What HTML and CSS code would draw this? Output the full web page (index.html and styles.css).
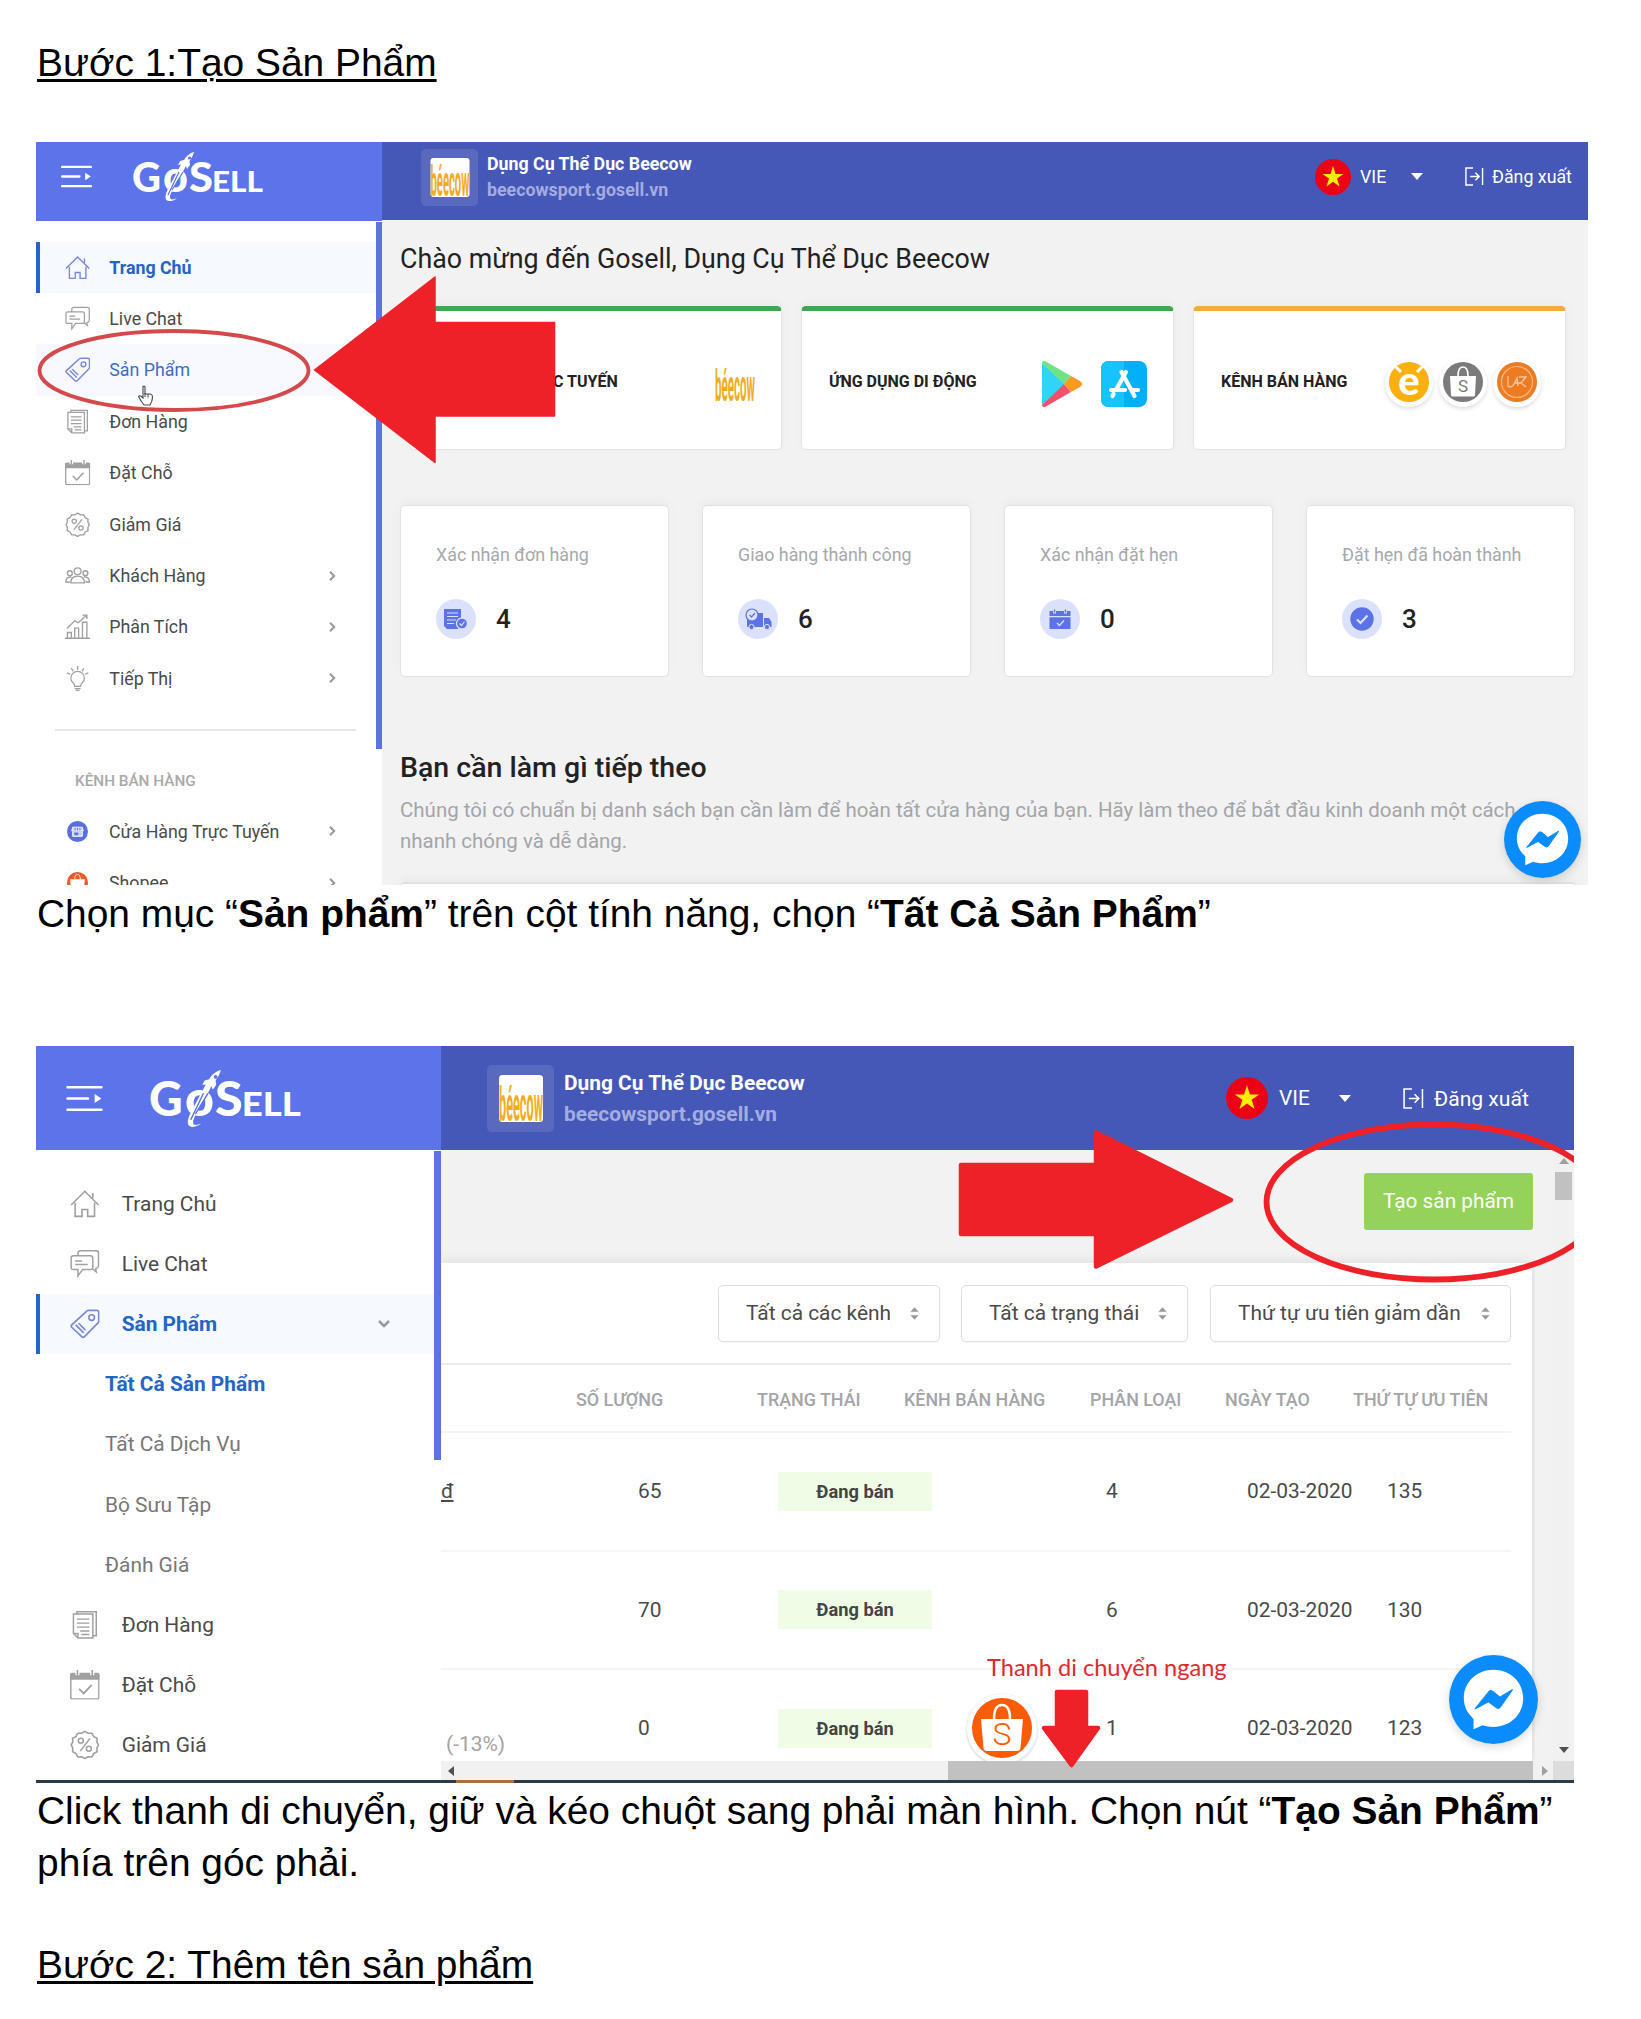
FILE: index.html
```html
<!DOCTYPE html>
<html lang="vi">
<head>
<meta charset="utf-8">
<title>Hướng dẫn tạo sản phẩm</title>
<link rel="stylesheet" href="styles.css">
</head>
<body>
<svg class="defs" aria-hidden="true">
  <symbol id="i-menu" viewBox="0 0 32 24"><path d="M1 2h30M1 12h18M1 22h30" fill="none" stroke="#fff" stroke-width="2.4" stroke-linecap="round"/><path d="M25 8l6 4-6 4z" fill="#fff"/></symbol>
  <symbol id="i-rocket" viewBox="0 0 130 50"><path d="M61 0c-4 1-8 4-10 8l-4 1-2 4 3-.5L36 35c-5 9-5 15 2 14 3-.5 5-2 6-3-4 2-7 2-7-1 0-4 9-18 16-31l1 3 3-4-.5-4c2-3 4-6 4.500-9z" fill="#fff"/><path d="M46 20L35 43M50 20L39 38" stroke="#5c73e9" stroke-width="1.200"/><circle cx="56.500" cy="6" r="1.600" fill="#5c73e9"/></symbol>
  <symbol id="i-home" viewBox="0 0 26 26"><path d="M1 14L13 2l12 12M4.500 12v12h6v-6h5v6h6V12M20 8V3.500" fill="none" stroke="currentColor" stroke-width="1.400"/></symbol>
  <symbol id="i-chat" viewBox="0 0 26 26"><path d="M7 6V3.500Q7 1.500 9 1.500h14q2 0 2 2V14q0 2-1 2.500-.5.500-1.500.500l.5 3-3-2.500M3 6h15q2 0 2 2v8q0 2-2 2h-7l-4 5.500V18H3q-2 0-2-2V8q0-2 2-2zM4.500 10.500h6M4.500 13.500h11" fill="none" stroke="currentColor" stroke-width="1.300"/></symbol>
  <symbol id="i-tag" viewBox="0 0 26 26"><path d="M14 2.500Q15 1.200 16.500 1.200H23.500Q25.200 1.200 25.200 3V11.500L12.500 24.500Q11.500 25.500 10.500 24.500L1.500 16Q.5 15 1.500 14zM5 14l7 7M7.500 12.500l6 6" fill="none" stroke="currentColor" stroke-width="1.500"/><circle cx="19" cy="7.500" r="2.500" fill="none" stroke="currentColor" stroke-width="1.400"/></symbol>
  <symbol id="i-orders" viewBox="0 0 26 26"><path d="M6 3.500V1.500h17v21h-2.500M3 3.500h17v21H7l-4-4zM3 20.500h4v4M6 8h11M6 11.500h11M6 15h11M9 18.500h8M10 21.500h7" fill="none" stroke="currentColor" stroke-width="1.300"/></symbol>
  <symbol id="i-cal" viewBox="0 0 26 26"><path d="M.7 4h24.600v20q0 1.300-1.300 1.300H2Q.7 25.300.7 24z" fill="none" stroke="currentColor" stroke-width="1.300"/><path d="M0 4.500Q0 2.500 2 2.500h22q2 0 2 2v4H0z" fill="currentColor"/><path d="M6.500 0v4.500M19.500 0v4.500" stroke="#fff" stroke-width="3.600"/><path d="M6.500 0v5M19.500 0v5" stroke="currentColor" stroke-width="1.400"/><path d="M8 16.500l4 4 7-7.500" fill="none" stroke="currentColor" stroke-width="1.500"/></symbol>
  <symbol id="i-sale" viewBox="0 0 26 26"><path d="M13 1.200l2.900 1.700 3.300-.1 1.600 3 2.900 1.500-.1 3.400L25 13l-1.400 2.700.1 3.400-2.900 1.500-1.600 3-3.300-.1L13 25l-2.900-1.500-3.300.1-1.600-3-2.900-1.500.1-3.400L1 13l1.400-2.300-.1-3.400 2.900-1.500 1.600-3 3.300.1z" fill="none" stroke="currentColor" stroke-width="1.400" stroke-linejoin="round"/><path d="M17.500 7.500l-8.500 11" stroke="currentColor" stroke-width="1.300"/><circle cx="9.500" cy="9.500" r="2.200" fill="none" stroke="currentColor" stroke-width="1.300"/><circle cx="16.500" cy="16.500" r="2.200" fill="none" stroke="currentColor" stroke-width="1.300"/></symbol>
  <symbol id="i-users" viewBox="0 0 26 26"><g fill="none" stroke="currentColor" stroke-width="1.400"><circle cx="13" cy="8.500" r="3.500"/><circle cx="5" cy="10.500" r="2.500"/><circle cx="21" cy="10.500" r="2.500"/><path d="M6 20.500q0-7 7-7t7 7zM6.500 14.500Q1 14 .8 19.500H5M19.500 14.500Q25 14 25.200 19.500H21"/></g></symbol>
  <symbol id="i-chart" viewBox="0 0 26 26"><path d="M0 25h26M2.500 25v-6h4v6M10 25V14.500h4V25M18 25V8.500h4.500V25M2 15L10 7l3.500 2L22 1.500M18 1.200h4.500v4" fill="none" stroke="currentColor" stroke-width="1.400"/></symbol>
  <symbol id="i-bulb" viewBox="0 0 26 26"><path d="M10 21q0-2-2-4-2-2-2-4.500a7 7 0 0 1 14 0q0 2.500-2 4.500-2 2-2 4zM10 23.300h6M11 25.200h4M13 0v4M6.500 2l2 3.500M19.500 2l-2 3.500M2 7l3.500 1.500M24 7l-3.500 1.500" fill="none" stroke="currentColor" stroke-width="1.300"/></symbol>
  <symbol id="i-store" viewBox="0 0 22 22"><circle cx="11" cy="11" r="11" fill="#5a6fdf"/><path d="M6 6.500h10l1 4H5zM6 11v5h10v-5" fill="#c9d1fb" stroke="#fff" stroke-width="1"/><path d="M8 12.500h3.500v2H8zM8.500 7v3M11 7v3M13.500 7v3" fill="#5a6fdf" stroke="#5a6fdf" stroke-width=".8"/></symbol>
  <symbol id="i-bag" viewBox="0 0 60 60"><circle cx="30" cy="30" r="30" fill="currentColor"/><path d="M9 21h42l-2.500 29q-.3 3-3.500 3H15q-3.200 0-3.500-3z" fill="#fff"/><path d="M22 21Q22 7 30 7t8 14" fill="none" stroke="#fff" stroke-width="2.500"/></symbol>
  <symbol id="i-right" viewBox="0 0 8 12"><path d="M1 1l5 5-5 5" fill="none" stroke="#999" stroke-width="2.500"/></symbol>
  <symbol id="i-down" viewBox="0 0 12 8"><path d="M1 1l5 5 5-5" fill="none" stroke="#999" stroke-width="2.500"/></symbol>
  <symbol id="i-flag" viewBox="0 0 36 36"><circle cx="18" cy="18" r="18" fill="#ec0015"/><path d="M18 7l2.500 8h8l-6.500 4.600 2.500 7.900L18 22.700l-6.500 4.800 2.500-7.900L7.500 15h8z" fill="#ffef00"/></symbol>
  <symbol id="i-exit" viewBox="0 0 20 20"><path d="M9 1H1.500v18H9M6 10h9M11.500 6l4 4-4 4M19 1v18" fill="none" stroke="#fff" stroke-width="1.500"/></symbol>
  <symbol id="i-messenger" viewBox="0 0 78 78"><circle cx="39" cy="39" r="39" fill="#0a8cff"/><path d="M39 13c-15 0-26 11-26 25 0 7 3 13 8.500 18v9l8-3.500c3 1 6 1.500 9.500 1.500 15 0 26-11 26-25S54 13 39 13z" fill="#fff"/><path d="M23 47l12-15q1.500-1.500 3.500 0l6 5 11-6.500-10.500 15q-1.500 2-3.500.5l-7-5z" fill="#0a8cff" stroke="#0a8cff" stroke-linejoin="round"/></symbol>
  <symbol id="i-sort" viewBox="0 0 10 14"><path d="M5 0l4.500 5h-9zM5 14L.5 9h9z" fill="#999"/></symbol>
</svg>

<main class="doc">
  <h2 class="step">Bước 1:Tạo Sản Phẩm</h2>

  <section class="shot shot-home">
    <div class="side">
      <div class="brand">
        <svg class="burger"><use href="#i-menu"/></svg>
        <svg class="logo" viewBox="0 0 130 50"><text class="lg" x="-1" y="40" textLength="29" lengthAdjust="spacingAndGlyphs">G</text><text class="lo" x="30" y="40" textLength="25" lengthAdjust="spacingAndGlyphs">o</text><text class="lg" x="56" y="40" textLength="24" lengthAdjust="spacingAndGlyphs">S</text><text class="ls" x="79" y="40" textLength="51" lengthAdjust="spacingAndGlyphs">ELL</text><use href="#i-rocket"/></svg>
      </div>
      <nav class="menu">
        <a class="item active"><svg><use href="#i-home"/></svg><span>Trang Chủ</span></a>
        <a class="item"><svg><use href="#i-chat"/></svg><span>Live Chat</span></a>
        <a class="item hover"><svg><use href="#i-tag"/></svg><span>Sản Phẩm</span></a>
        <a class="item"><svg><use href="#i-orders"/></svg><span>Đơn Hàng</span></a>
        <a class="item"><svg><use href="#i-cal"/></svg><span>Đặt Chỗ</span></a>
        <a class="item"><svg><use href="#i-sale"/></svg><span>Giảm Giá</span></a>
        <a class="item"><svg><use href="#i-users"/></svg><span>Khách Hàng</span><svg class="chev"><use href="#i-right"/></svg></a>
        <a class="item"><svg><use href="#i-chart"/></svg><span>Phân Tích</span><svg class="chev"><use href="#i-right"/></svg></a>
        <a class="item"><svg><use href="#i-bulb"/></svg><span>Tiếp Thị</span><svg class="chev"><use href="#i-right"/></svg></a>
        <hr>
        <p class="group">KÊNH BÁN HÀNG</p>
        <a class="item"><svg class="round"><use href="#i-store"/></svg><span>Cửa Hàng Trực Tuyến</span><svg class="chev"><use href="#i-right"/></svg></a>
        <a class="item"><svg class="round shopee"><use href="#i-bag"/></svg><span>Shopee</span><svg class="chev"><use href="#i-right"/></svg></a>
      </nav>
      <i class="track"></i>
    </div>
    <div class="main">
      <header class="top">
        <div class="shop"><svg viewBox="0 0 40 40"><rect width="40" height="40" rx="3" fill="#fff"/><text class="bee" transform="translate(0 39) scale(1 2.900)" textLength="40" lengthAdjust="spacingAndGlyphs">béecow</text></svg></div>
        <div class="who"><b>Dụng Cụ Thể Dục Beecow</b><em>beecowsport.gosell.vn</em></div>
        <svg class="flag"><use href="#i-flag"/></svg><span class="lang">VIE</span><i class="caret"></i>
        <svg class="exit"><use href="#i-exit"/></svg><span class="logout">Đăng xuất</span>
      </header>
      <div class="home">
        <h1>Chào mừng đến Gosell, Dụng Cụ Thể Dục Beecow</h1>
        <div class="channels">
          <div class="card green"><span>CỬA HÀNG TRỰC TUYẾN</span><svg class="beecow" viewBox="0 0 40 40"><text class="bee" transform="translate(0 37) scale(1 2.900)" textLength="40" lengthAdjust="spacingAndGlyphs">béecow</text></svg></div>
          <div class="card green"><span>ỨNG DỤNG DI ĐỘNG</span>
            <svg class="play" viewBox="0 0 40 46"><path d="M0 2v42L23 23z" fill="#32d3fb"/><path d="M0 2Q0 0 3 0L29 15l-7 8z" fill="#72e186"/><path d="M3 46Q0 46 0 44l22-21 7 8z" fill="#f2506d"/><path d="M29 15l9 5q4 3 0 6l-9 5-7-8z" fill="#f79a1d"/></svg>
            <svg class="appstore" viewBox="0 0 46 46"><rect width="46" height="46" rx="8" fill="#02b0f7"/><path d="M0 8q0-8 8-8h15v46H8q-8 0-8-8z" fill="#17c3fd"/><path d="M20.500 11l13 24M25 11L15.500 28M10 29h14M31 29h6M12.500 33L11.500 35" stroke="#fff" stroke-width="4.200" stroke-linecap="round"/></svg></div>
          <div class="card orange"><span>KÊNH BÁN HÀNG</span>
            <svg class="chan" viewBox="0 0 40 40"><circle cx="20" cy="20" r="20" fill="#fbb00d"/><path d="M5 3l7 7M35 3l-7 7" stroke="#fff" stroke-width="3"/><text class="ce" x="20" y="33" text-anchor="middle">e</text></svg>
            <svg class="chan" viewBox="0 0 40 40"><circle cx="20" cy="20" r="20" fill="#7b7b7b"/><path d="M7 14h26l-1 19q0 1.500-2 1.500H10q-2 0-2-1.500z" fill="#fff"/><path d="M15 14q0-9 5-9t5 9" fill="none" stroke="#fff" stroke-width="1.600"/><text class="cs" x="20" y="30" text-anchor="middle">S</text></svg>
            <svg class="chan" viewBox="0 0 40 40"><circle cx="20" cy="20" r="20" fill="#ee7a22"/><circle cx="20" cy="20" r="15.500" fill="none" stroke="#fbb98a" stroke-width="1.200"/><path d="M11 14v9q0 2 2 2 3 0 5-5l2-4 1 8M17 21h7M22 15h7l-5 6 5 4" fill="none" stroke="#fbc7a0" stroke-width="1.300"/></svg></div>
        </div>
        <div class="stats">
          <div class="card"><p>Xác nhận đơn hàng</p><div><svg viewBox="0 0 40 40"><circle cx="20" cy="20" r="20" fill="#dce1fb"/><path d="M8 10h17v12l-3 8H11l-3-3z" fill="#5b73e4"/><path d="M11 14h11M11 17.500h11M11 21h9M11 24.500h7" stroke="#dce1fb" stroke-width="1.200"/><circle cx="26" cy="24.500" r="5.500" fill="#5b73e4" stroke="#dce1fb" stroke-width="1.300"/><path d="M23.500 24.500l2 2 3-4" fill="none" stroke="#dce1fb" stroke-width="1.200"/></svg><b>4</b></div></div>
          <div class="card"><p>Giao hàng thành công</p><div><svg viewBox="0 0 40 40"><circle cx="20" cy="20" r="20" fill="#dce1fb"/><path d="M9 14h16v14H9zM26 19h5l2.500 4v5H26z" fill="#5b73e4"/><circle cx="13.500" cy="28" r="2.600" fill="#5b73e4" stroke="#dce1fb"/><circle cx="29" cy="28" r="2.600" fill="#5b73e4" stroke="#dce1fb"/><circle cx="14" cy="16" r="6" fill="#dce1fb" stroke="#5b73e4" stroke-width="1.200"/><path d="M11.500 16l2 2 3.500-4" fill="none" stroke="#5b73e4" stroke-width="1.200"/></svg><b>6</b></div></div>
          <div class="card"><p>Xác nhận đặt hẹn</p><div><svg viewBox="0 0 40 40"><circle cx="20" cy="20" r="20" fill="#dce1fb"/><path d="M9.500 12h21v5h-21zM9.500 18.300h21V30h-21z" fill="#5b73e4"/><path d="M14.500 10v4.500M25.500 10v4.500" stroke="#dce1fb" stroke-width="3"/><path d="M14.500 10.500v3M25.500 10.500v3" stroke="#5b73e4" stroke-width="1.400"/><path d="M17 24l2.500 2.500 4.500-5" fill="none" stroke="#dce1fb" stroke-width="1.400"/></svg><b>0</b></div></div>
          <div class="card"><p>Đặt hẹn đã hoàn thành</p><div><svg viewBox="0 0 40 40"><circle cx="20" cy="20" r="20" fill="#dce1fb"/><circle cx="20" cy="20" r="11.700" fill="#5b73e4"/><path d="M15 20.500l3.500 3.500 7-7.500" fill="none" stroke="#dce1fb" stroke-width="2.200"/></svg><b>3</b></div></div>
        </div>
        <h3>Bạn cần làm gì tiếp theo</h3>
        <p class="intro">Chúng tôi có chuẩn bị danh sách bạn cần làm để hoàn tất cửa hàng của bạn. Hãy làm theo để bắt đầu kinh doanh một cách<br>nhanh chóng và dễ dàng.</p>
        <div class="next"></div>
      </div>
    </div>
    <svg class="marks" viewBox="36 142 1552 743">
      <ellipse cx="174" cy="370.500" rx="134.500" ry="39.500" fill="none" stroke="#d44a4c" stroke-width="3.800"/>
      <path d="M314.500 370L435 277v45.500h119.500V416H435v46.500z" fill="#ee2129" stroke="#ee2129" stroke-width="1.500" stroke-linejoin="round"/>
      <path d="M143 386.500q1.800-1 2 1v6.500h5.500q2 .5 2 3c0 3-.5 5-2.500 8h-6q-3-3.500-5.500-8.500 1-1.500 2.800 0l1.700 1.500z" fill="#fff" stroke="#444" stroke-width="1.100"/><path d="M145 393v4M148 394v3.500" stroke="#444"/>
    </svg>
    <svg class="messenger"><use href="#i-messenger"/></svg>
  </section>

  <p class="text">Chọn mục “<b>Sản phẩm</b>” trên cột tính năng, chọn “<b>Tất Cả Sản Phẩm</b>”</p>

  <section class="shot shot-list">
    <div class="side">
      <div class="brand">
        <svg class="burger"><use href="#i-menu"/></svg>
        <svg class="logo" viewBox="0 0 130 50"><text class="lg" x="-1" y="40" textLength="29" lengthAdjust="spacingAndGlyphs">G</text><text class="lo" x="30" y="40" textLength="25" lengthAdjust="spacingAndGlyphs">o</text><text class="lg" x="56" y="40" textLength="24" lengthAdjust="spacingAndGlyphs">S</text><text class="ls" x="79" y="40" textLength="51" lengthAdjust="spacingAndGlyphs">ELL</text><use href="#i-rocket"/></svg>
      </div>
      <nav class="menu">
        <a class="item"><svg><use href="#i-home"/></svg><span>Trang Chủ</span></a>
        <a class="item"><svg><use href="#i-chat"/></svg><span>Live Chat</span></a>
        <a class="item active"><svg><use href="#i-tag"/></svg><span>Sản Phẩm</span><svg class="chev open"><use href="#i-down"/></svg></a>
        <a class="sub current">Tất Cả Sản Phẩm</a>
        <a class="sub">Tất Cả Dịch Vụ</a>
        <a class="sub">Bộ Sưu Tập</a>
        <a class="sub">Đánh Giá</a>
        <a class="item"><svg><use href="#i-orders"/></svg><span>Đơn Hàng</span></a>
        <a class="item"><svg><use href="#i-cal"/></svg><span>Đặt Chỗ</span></a>
        <a class="item"><svg><use href="#i-sale"/></svg><span>Giảm Giá</span></a>
      </nav>
      <i class="track"></i>
    </div>
    <div class="main">
      <header class="top">
        <div class="shop"><svg viewBox="0 0 40 40" preserveAspectRatio="none"><rect width="40" height="40" rx="3" fill="#fff"/><text class="bee" transform="translate(0 39) scale(1 2.700)" textLength="40" lengthAdjust="spacingAndGlyphs">béecow</text></svg></div>
        <div class="who"><b>Dụng Cụ Thể Dục Beecow</b><em>beecowsport.gosell.vn</em></div>
        <svg class="flag"><use href="#i-flag"/></svg><span class="lang">VIE</span><i class="caret"></i>
        <svg class="exit"><use href="#i-exit"/></svg><span class="logout">Đăng xuất</span>
      </header>
      <div class="list">
        <div class="bar"><button class="create">Tạo sản phẩm</button></div>
        <div class="panel">
          <div class="filters">
            <div class="select s1"><span>Tất cả các kênh</span><svg><use href="#i-sort"/></svg></div>
            <div class="select s2"><span>Tất cả trạng thái</span><svg><use href="#i-sort"/></svg></div>
            <div class="select s3"><span>Thứ tự ưu tiên giảm dần</span><svg><use href="#i-sort"/></svg></div>
          </div>
          <div class="head"><i></i><span>SỐ LƯỢNG</span><span>TRẠNG THÁI</span><span>KÊNH BÁN HÀNG</span><span>PHÂN LOẠI</span><span>NGÀY TẠO</span><span>THỨ TỰ ƯU TIÊN</span></div>
          <div class="row"><span class="price"><u>đ</u></span><span>65</span><b>Đang bán</b><i></i><span>4</span><span>02-03-2020</span><span>135</span></div>
          <div class="row"><i></i><span>70</span><b>Đang bán</b><i></i><span>6</span><span>02-03-2020</span><span>130</span></div>
          <div class="row last"><span class="off">(-13%)</span><span>0</span><b>Đang bán</b><svg class="bag" viewBox="0 0 60 60"><use href="#i-bag"/><text x="30" y="47" text-anchor="middle">S</text></svg><span>1</span><span>02-03-2020</span><span>123</span></div>
        </div>
        <div class="hbar"><i class="tri left"></i><i class="thumb"></i><i class="tri right"></i></div>
        <div class="vbar"><i class="tri up"></i><i class="thumb"></i><i class="tri dn"></i></div>
      </div>
    </div>
    <div class="taskbar"><i></i></div>
    <svg class="marks" viewBox="36 1046 1538 737">
      <ellipse cx="1434" cy="1202" rx="167.500" ry="77.500" fill="none" stroke="#ee2129" stroke-width="5.800"/>
      <path d="M961 1165h135v-32.500l135 67.500-135 66.500V1234H961z" fill="#ee2129" stroke="#ee2129" stroke-width="4.500" stroke-linejoin="round"/>
      <path d="M1057 1692h29v36h12l-26.500 37-27.500-37h13z" fill="#ee2129" stroke="#ee2129" stroke-width="4.500" stroke-linejoin="round"/>
    </svg>
    <span class="note">Thanh di chuyển ngang</span>
    <svg class="messenger"><use href="#i-messenger"/></svg>
  </section>

  <p class="text second">Click thanh di chuyển, giữ và kéo chuột sang phải màn hình. Chọn nút “<b>Tạo Sản Phẩm</b>”<br>phía trên góc phải.</p>
  <h2 class="step">Bước 2: Thêm tên sản phẩm</h2>
</main>
</body>
</html>
```
FILE: styles.css
```css
* { box-sizing: border-box; }
body { margin: 0; background: #fff; color: #000; font-family: "Liberation Sans", Arial, sans-serif; }
.defs { position: absolute; width: 0; height: 0; }
svg { display: block; flex: none; overflow: visible; }
.doc { width: 1641px; height: 2019px; overflow: hidden; padding: 37px 0 0 36px; display: flex; flex-direction: column; }
.step, .text { margin: 0; font-size: 38.9px; line-height: 51.5px; font-weight: 400; white-space: nowrap; padding-left: 1px; }
.step { text-decoration: underline; text-decoration-thickness: 3px; text-underline-offset: 3px; }
.doc > .step:first-child { height: 105px; }
.text { height: 161px; padding-top: 3px; }
.text.second { height: 156px; padding-top: 2px; }

/* screenshots */
.shot { position: relative; display: flex; overflow: hidden; font-family: Roboto, sans-serif; color: #4a4a4a; background: #fff; white-space: nowrap; flex: none; }
.shot-home { width: 1552px; height: 743px; font-size: 17.8px; }
.shot-list { width: 1538px; height: 737px; font-size: 20.9px; }
.side { position: relative; flex: none; background: #fff; }
.shot-home .side { width: 346px; }
.shot-list .side { width: 405px; }
.brand { background: #5c73e9; display: flex; align-items: flex-start; }
.shot-home .brand { height: 79px; padding: 10px 0 0 25px; gap: 41px; }
.shot-list .brand { height: 104px; padding: 24px 0 0 30px; gap: 47px; }
.burger { width: 31px; height: 23px; margin-top: 13px; }
.shot-list .burger { width: 37px; height: 27px; margin-top: 15px; }
.logo { width: 130px; height: 50px; fill: #fff; font-family: Lato, sans-serif; font-weight: 900; }
.shot-list .logo { width: 151px; height: 58px; }
.lg { font-size: 41px; }
.lo { font-size: 43px; }
.ls { font-size: 28.500px; }
.track { position: absolute; right: 0; background: #5c73e0; }
.shot-home .track { top: 80px; width: 6px; height: 527px; }
.shot-list .track { top: 105px; width: 7px; height: 309px; }

.menu { display: flex; flex-direction: column; }
.shot-home .menu { padding-top: 20.5px; }
.shot-list .menu { padding-top: 23.5px; }
.item { display: flex; align-items: center; flex: none; }
.shot-home .item { height: 51.4px; padding-left: 29px; padding-right: 46px; }
.shot-list .item, .sub { height: 60.2px; padding-left: 34px; padding-right: 51px; }
.item > svg:first-child { width: 1.42em; height: 1.42em; color: #a0a0a0; margin-right: 19px; }
.shot-list .item > svg:first-child { margin-right: 22px; }
.shot-home .item .round { width: 21px; height: 21px; margin-left: 2px; margin-right: 21px; }
.shot-home .item .shopee { color: #ee5a24; }
.item.active { background: #f6f9fe; color: #2465c5; font-weight: 700; box-shadow: inset 4px 0 #2465c5; }
.item.hover { background: #f7f9fe; color: #3a6fc4; }
.item.active > svg:first-child, .item.hover > svg:first-child { color: #7c88d6; }
.chev { width: 7px; height: 10px; margin-left: auto; }
.chev.open { width: 12px; height: 8px; margin-right: 0; }
.sub { display: flex; align-items: center; padding-left: 69px !important; color: #777; }
.sub.current { color: #2465c5; font-weight: 700; }
hr { width: 301px; height: 2px; border: 0; background: #e6e6e6; margin: 24.500px 0 0 19px; flex: none; }
.group { margin: 36px 0 11px 39px; height: 28px; line-height: 28px; font-size: 15.300px; font-weight: 500; color: #a9a9a9; }

.main { flex: 1; display: flex; flex-direction: column; min-width: 0; background: #f2f2f2; }
.top { display: flex; align-items: center; background: #4557b7; color: #fff; flex: none; }
.shot-home .top { height: 78px; padding-left: 39px; padding-bottom: 9px; }
.shot-list .top { height: 104px; padding-left: 46px; }
.shop { background: rgba(255,255,255,.11); border-radius: 5px; display: flex; align-items: center; justify-content: center; }
.shot-home .shop { width: 57px; height: 57px; margin-top: 1px; }
.shot-list .shop { width: 67px; height: 67px; }
.shop svg { width: 40px; height: 39px; }
.shot-list .shop svg { width: 44px; height: 47px; }
.bee { font: 700 15px Roboto, sans-serif; fill: #f2ac24; }
.who { display: flex; flex-direction: column; }
.shot-home .who { margin-left: 9px; width: 828px; }
.shot-list .who { margin-left: 10px; width: 662px; padding-top: 1px; }
.who b, .who em { font-style: normal; font-weight: 700; height: 26px; line-height: 26px; }
.who em { color: #a4ade0; }
.shot-list .who b, .shot-list .who em { height: 31px; line-height: 31px; }
.flag { width: 36px; height: 36px; }
.shot-list .flag { width: 42px; height: 42px; }
.lang { margin-left: 9px; width: 51px; }
.shot-list .lang { margin-left: 11px; width: 60px; }
.caret { border: 6.500px solid transparent; border-top: 7px solid #fff; border-bottom: 0; margin-right: 41px; }
.shot-list .caret { margin-right: 51px; }
.exit { width: 20px; height: 19px; margin-right: 8px; }
.shot-list .exit { width: 22px; height: 21px; margin-right: 10px; }
.shot-list .logout { font-size: 21.100px; }

/* dashboard */
.home { padding-left: 18px; display: flex; flex-direction: column; height: 665px; overflow: hidden; }
h1 { margin: 21px 0 0; height: 36px; line-height: 36px; font-size: 26.800px; font-weight: 400; color: #222; }
.card { background: #fff; border: 1.500px solid #e2e2e2; border-radius: 5px; box-shadow: 0 -4px 12px rgba(0,0,0,.03); }
.channels { display: flex; gap: 19px; margin: 29px 0 0 9px; }
.channels .card { width: 373px; height: 144px; padding-left: 27px; display: flex; align-items: center; font-size: 16px; font-weight: 700; color: #222; padding-top: 3px; flex: none; }
.channels .green { border-top: 5px solid #3fa652; }
.channels .orange { border-top: 5px solid #f2ac3c; }
.beecow { width: 40px; height: 40px; margin: 4px 26px 0 auto; }
.play { width: 40px; height: 46px; margin-left: auto; margin-top: 5px; }
.appstore { width: 46px; height: 46px; margin: 5px 26px 0 19px; }
.chan { width: 40px; height: 40px; margin-left: 14px; border-radius: 50%; box-shadow: 0 1px 0 4px #fff, 0 3px 4px 4px #ddd; }
.orange span { margin-right: auto; }
.orange .chan:last-child { margin-right: 28px; }
.ce { font: 900 40px Lato, sans-serif; fill: #fff; }
.cs { font: 400 17px Roboto, sans-serif; fill: #7b7b7b; }
.stats { display: flex; gap: 33px; margin-top: 55px; }
.stats .card { width: 269px; height: 172px; padding: 36px 0 0 35px; flex: none; }
.stats p { margin: 0; height: 26px; line-height: 26px; font-size: 17.850px; color: #a6a8ab; }
.stats div div { display: flex; align-items: center; gap: 20px; margin-top: 31px; }
.stats svg { width: 40px; height: 40px; }
.stats b { font-size: 26px; font-weight: 500; color: #222; }
h3 { margin: 71px 0 0; height: 40px; line-height: 40px; font-size: 28.500px; font-weight: 500; color: #222; }
.intro { margin: 7px 0 0; font-size: 20.480px; line-height: 30.500px; color: #a3a5a8; }
.next { height: 20px; width: 1176px; margin-top: 26px; background: #fff; border-top: 2px solid #e0e0e0; border-radius: 5px; flex: none; box-shadow: 0 -3px 10px rgba(0,0,0,.04); }

.marks { position: absolute; left: 0; top: 0; width: 100%; height: 100%; overflow: hidden; }
.messenger { position: absolute; border-radius: 50%; box-shadow: 0 3px 10px rgba(0,0,0,.15); }
.shot-home .messenger { width: 77px; height: 77px; left: 1468px; top: 658.500px; }
.shot-list .messenger { width: 89px; height: 89px; left: 1412.500px; top: 609px; }

/* product list */
.list { display: grid; grid-template-columns: 1112px 1fr; grid-template-rows: 113px 498px 19px; height: 630px; }
.list .bar { display: flex; padding: 23px 0 0 923px; }
.create { width: 169px; height: 57px; padding: 0 0 1px; border: 0; border-radius: 3px; background: #94d25a; color: #fff; font: 20.800px Roboto, sans-serif; }
.panel { width: 1091px; background: #fff; box-shadow: 0 0 12px rgba(0,0,0,.11); clip-path: inset(-12px -3px 0 0); overflow: hidden; grid-row: 2; grid-column: 1; }
.filters { display: flex; height: 102px; width: 1070px; padding: 22px 0 0 277px; border-bottom: 2px solid #ececec; }
.select { height: 57px; border: 1.500px solid #dcdde6; border-radius: 5px; display: flex; align-items: center; justify-content: space-between; padding: 0 20px 1px 27px; box-shadow: 0 1px 2px rgba(0,0,0,.04); flex: none; }
.select svg { width: 9px; height: 13px; }
.s1 { width: 222px; margin-right: 21px; }
.s2 { width: 227px; margin-right: 22px; }
.s3 { width: 301px; }
.head, .row { display: grid; align-items: center; width: 1070px; border-bottom: 2px solid #f5f5f5; }
.head { grid-template-columns: 135px 181px 147px 186px 135px 128px 1fr; height: 68px; font-size: 17.900px; font-weight: 500; color: #a3a5a8; padding-top: 2px; }
.row { grid-template-columns: 197px 140px 187px 141px 141px 140px 1fr; height: 118.500px; }
.row b { width: 154px; height: 39px; line-height: 39px; background: #f0fde6; text-align: center; font-size: 18.300px; font-weight: 700; color: #444; }
.row.last { border: 0; height: 116px; }
.off { color: #a3a3a3; padding: 32px 0 0 5px; }
.bag { width: 60px; height: 60px; color: #fd5c03; margin-left: 7px; border-radius: 50%; box-shadow: 0 1px 0 5px #fff, 0 2px 2px 6px #dde2f0; }
.bag text { font: 300 32px Roboto, sans-serif; fill: #fd5c03; }
.hbar { grid-row: 3; grid-column: 1; background: #f1f1f1; display: flex; align-items: center; justify-content: space-between; padding: 0 5px 0 7px; }
.hbar .thumb { width: 585px; height: 19px; background: #c1c1c1; margin: 0 -485px 0 0; }
.tri { border: 5px solid transparent; }
.left { border-right: 6px solid #505050; border-left: 0; }
.right { border-left: 6px solid #a0a0a0; border-right: 0; }
.vbar { grid-row: 1 / 4; grid-column: 2; display: flex; flex-direction: column; align-items: center; padding-top: 8px; background: linear-gradient(#dcdcdc, #dcdcdc) bottom / 100% 19px no-repeat, #f1f1f1; }
.up { border-bottom: 6px solid #a0a0a0; border-top: 0; }
.vbar .thumb { width: 17px; height: 28px; background: #c1c1c1; margin-top: 8px; }
.dn { border-top: 6px solid #505050; border-bottom: 0; margin-top: 547px; }
.taskbar { position: absolute; left: 0; right: 0; bottom: 0; height: 3px; background: #2d3b44; }
.taskbar i { display: block; width: 58px; height: 3px; margin-left: 420px; background: #a8703c; }
.note { position: absolute; left: 951px; top: 605px; font: 23.600px/32px Lato, "Noto Sans", sans-serif; color: #dd2a30; }
```
